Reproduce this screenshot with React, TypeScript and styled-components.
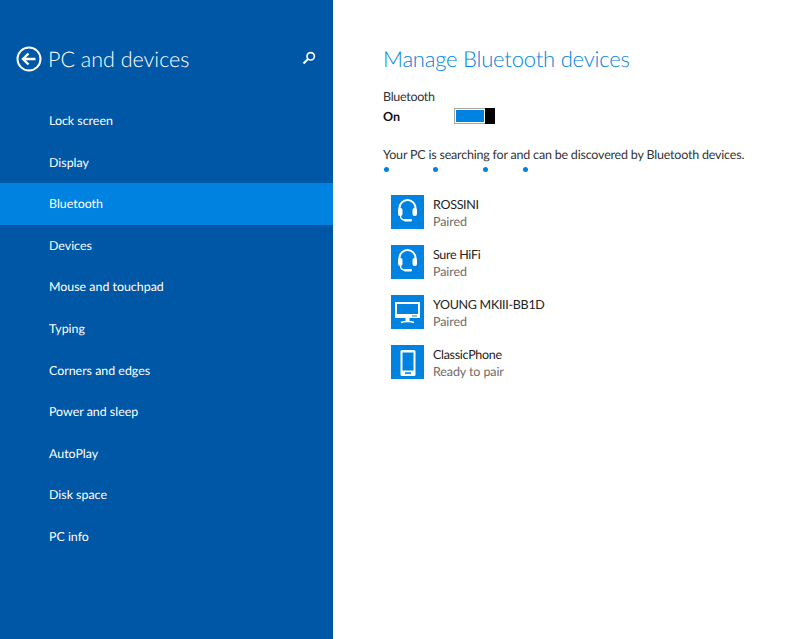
import React from "react"
import styled, { createGlobalStyle } from "styled-components"

const GlobalStyle = createGlobalStyle`
  html, body {
    margin: 0;
    padding: 0;
    background: #fff;
    font-family: Lato, "Open Sans", "Liberation Sans", sans-serif;
    text-rendering: geometricPrecision;
  }
`

const Page = styled.div`
  display: flex;
  width: 800px;
  height: 639px;
  overflow: hidden;
`

const Sidebar = styled.nav`
  width: 333px;
  height: 100%;
  flex: none;
  background: #0057a5;
  color: #fff;
  padding-top: 43px;
  box-sizing: border-box;
`

const SidebarHeader = styled.div`
  display: flex;
  align-items: center;
  height: 32px;
  padding: 0 16px;
  margin-bottom: 25px;
`

const SidebarTitle = styled.h1`
  flex: 1;
  margin: 0 0 0 6px;
  font-size: 21.5px;
  font-weight: 300;
  line-height: 32px;
  color: #fff;
`

const SearchIcon = styled.svg`
  width: 14px;
  height: 14px;
  margin-right: 1px;
  margin-top: -2px;
`

const NavItem = styled.div<{ $active?: boolean }>`
  height: 41.6px;
  line-height: 41.6px;
  padding-left: 49px;
  font-size: 12.4px;
  color: #fff;
  background: ${({ $active }) => ($active ? "#0082e0" : "transparent")};
`

const Content = styled.main`
  flex: 1;
  padding: 43px 0 0 50px;
`

const Heading = styled.h2`
  margin: 0 0 13px;
  font-size: 22px;
  line-height: 32px;
  font-weight: 300;
  letter-spacing: -0.2px;
  color: #0082e0;
`

const ToggleLabel = styled.div`
  font-size: 12.5px;
  line-height: 17px;
  letter-spacing: -0.3px;
  color: #333;
`

const ToggleRow = styled.div`
  display: flex;
  align-items: center;
  height: 22px;
`

const ToggleState = styled.span`
  width: 71px;
  font-size: 12.5px;
  font-weight: 700;
  color: #111;
`

const ToggleTrack = styled.div`
  display: flex;
  align-items: stretch;
  width: 41px;
  height: 16px;
  box-sizing: border-box;
  border: 1px solid #a9a4a0;
  border-right: none;
  background: #fff;
`

const ToggleFill = styled.div`
  flex: 1;
  margin: 1px;
  background: #0082e0;
`

const ToggleThumb = styled.div`
  width: 10px;
  margin: -1px 0;
  background: #000;
`

const StatusText = styled.p`
  margin: 19px 0 0;
  font-size: 12.5px;
  line-height: 18px;
  letter-spacing: -0.2px;
  color: #333;
`

const Dots = styled.div`
  display: flex;
  margin: 3px 0 0 1px;
  height: 4px;
`

const Dot = styled.span<{ $gap: number }>`
  width: 5px;
  height: 5px;
  border-radius: 50%;
  background: #0082e0;
  margin-right: ${({ $gap }) => $gap}px;
`

const DeviceList = styled.div`
  display: flex;
  flex-direction: column;
  gap: 16px;
  margin: 24px 0 0 8px;
`

const DeviceRow = styled.div`
  display: flex;
  align-items: center;
  height: 34px;
`

const DeviceTile = styled.div`
  width: 33px;
  height: 34px;
  flex: none;
  background: #0082e0;
  margin-right: 9px;

  svg {
    display: block;
  }
`

const DeviceText = styled.div`
  display: flex;
  flex-direction: column;
  padding-top: 2px;
`

const DeviceName = styled.span`
  font-size: 12.5px;
  line-height: 17px;
  letter-spacing: -0.3px;
  color: #222;
`

const DeviceStatus = styled.span`
  font-size: 12.5px;
  line-height: 17px;
  letter-spacing: -0.1px;
  color: #6f6a66;
`

const HeadsetIcon = () => (
  <svg width="33" height="34" viewBox="0 0 33 34" fill="none">
    <path d="M8.5 15V13a8 8 0 0 1 16 0V15" stroke="#fff" strokeWidth="2" />
    <rect x="7" y="13" width="4.5" height="8" rx="2" fill="#fff" />
    <rect x="21.5" y="13" width="4.5" height="8" rx="2" fill="#fff" />
    <path d="M9.5 21c0 3 2 4 5 4.5" stroke="#fff" strokeWidth="1.3" />
    <rect x="13" y="24" width="8" height="2.5" rx="1.2" fill="#fff" />
  </svg>
)

const MonitorIcon = () => (
  <svg width="33" height="34" viewBox="0 0 33 34" fill="none">
    <rect x="4" y="7" width="25" height="16" fill="#fff" />
    <rect x="6" y="9" width="21" height="10" fill="#0082e0" />
    <rect x="21" y="20.5" width="5" height="1" fill="#0082e0" />
    <rect x="14.5" y="23" width="4" height="3.5" fill="#fff" />
    <path d="M10 27.5c3-1.4 10-1.4 13 0" stroke="#fff" strokeWidth="1.6" />
  </svg>
)

const PhoneIcon = () => (
  <svg width="33" height="34" viewBox="0 0 33 34" fill="none">
    <rect x="9.5" y="5" width="15" height="26" rx="1.5" fill="#fff" />
    <rect x="11.5" y="7.5" width="11" height="18" fill="#0082e0" />
    <rect x="14" y="27.3" width="6" height="1.6" fill="#0082e0" />
  </svg>
)

const navItems = [
  "Lock screen",
  "Display",
  "Bluetooth",
  "Devices",
  "Mouse and touchpad",
  "Typing",
  "Corners and edges",
  "Power and sleep",
  "AutoPlay",
  "Disk space",
  "PC info",
]

const devices = [
  { name: "ROSSINI", status: "Paired", icon: <HeadsetIcon /> },
  { name: "Sure HiFi", status: "Paired", icon: <HeadsetIcon /> },
  { name: "YOUNG MKIII-BB1D", status: "Paired", icon: <MonitorIcon /> },
  { name: "ClassicPhone", status: "Ready to pair", icon: <PhoneIcon /> },
]

const App: React.FC = () => {
  return (
    <Page>
      <GlobalStyle />
      <Sidebar>
        <SidebarHeader>
          <svg width="26" height="26" viewBox="0 0 26 26" fill="none">
            <circle cx="13" cy="13" r="11.5" stroke="#fff" strokeWidth="2" />
            <path d="M19.5 13H7.5M12.5 7.5L7 13l5.5 5.5" stroke="#fff" strokeWidth="2.4" />
          </svg>
          <SidebarTitle>PC and devices</SidebarTitle>
          <SearchIcon viewBox="0 0 14 14" fill="none">
            <circle cx="8.7" cy="5.3" r="3.7" stroke="#fff" strokeWidth="1.6" />
            <path d="M6 8L1.5 12.5" stroke="#fff" strokeWidth="2.2" />
          </SearchIcon>
        </SidebarHeader>
        {navItems.map((item) => (
          <NavItem key={item} $active={item === "Bluetooth"}>
            {item}
          </NavItem>
        ))}
      </Sidebar>
      <Content>
        <Heading>Manage Bluetooth devices</Heading>
        <ToggleLabel>Bluetooth</ToggleLabel>
        <ToggleRow>
          <ToggleState>On</ToggleState>
          <ToggleTrack>
            <ToggleFill />
            <ToggleThumb />
          </ToggleTrack>
        </ToggleRow>
        <StatusText>Your PC is searching for and can be discovered by Bluetooth devices.</StatusText>
        <Dots>
          <Dot $gap={44} />
          <Dot $gap={45} />
          <Dot $gap={35} />
          <Dot $gap={0} />
        </Dots>
        <DeviceList>
          {devices.map((device) => (
            <DeviceRow key={device.name}>
              <DeviceTile>{device.icon}</DeviceTile>
              <DeviceText>
                <DeviceName>{device.name}</DeviceName>
                <DeviceStatus>{device.status}</DeviceStatus>
              </DeviceText>
            </DeviceRow>
          ))}
        </DeviceList>
      </Content>
    </Page>
  )
}

export default App
